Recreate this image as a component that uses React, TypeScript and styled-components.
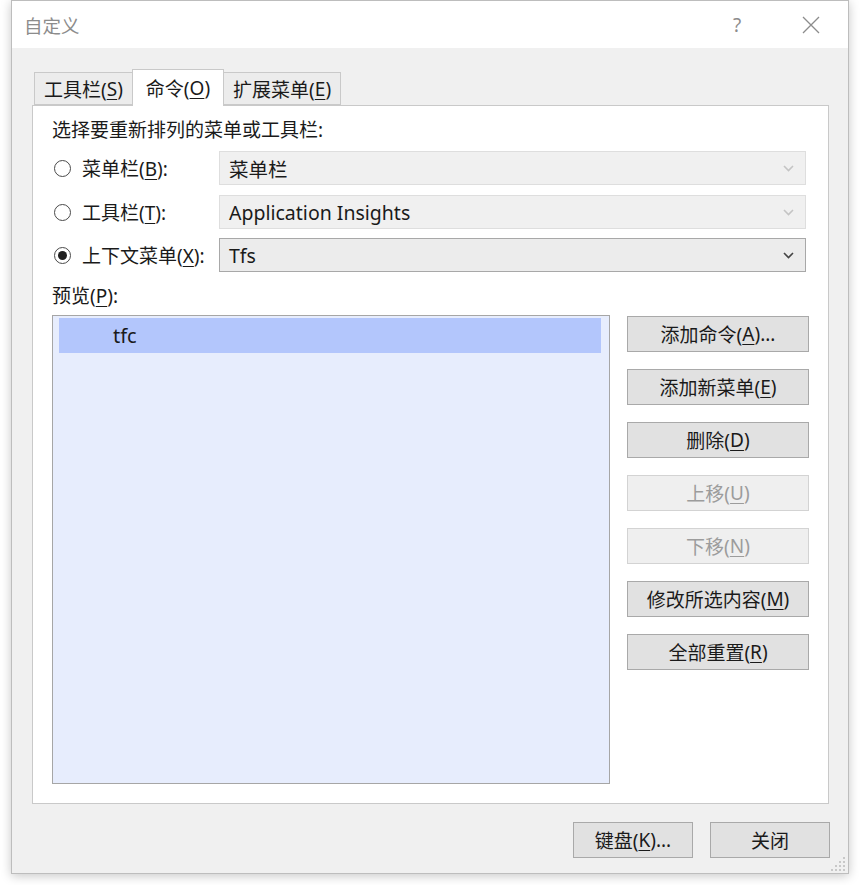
import React from 'react';
import styled, { createGlobalStyle } from 'styled-components';

const Global = createGlobalStyle`
  html, body { margin: 0; padding: 0; background: #ffffff; }
  body { font-family: "Noto Sans", "Noto Sans CJK SC", sans-serif; color: #1a1a1a; }
`;

const FONT = `"Noto Sans", "Noto Sans CJK SC", sans-serif`;

const Page = styled.div`
  width: 860px; height: 885px; overflow: hidden;
  padding: 0 0 0 11px; box-sizing: border-box;
`;

const Window = styled.div`
  width: 838px; height: 874px; box-sizing: border-box;
  border: 1px solid #bdbdbd; background: #f0f0f0;
  box-shadow: 0 2px 10px rgba(0, 0, 0, 0.22);
  display: flex; flex-direction: column; position: relative;
`;

const TitleBar = styled.div`
  height: 47px; background: #ffffff; display: flex; align-items: center;
  padding: 0 0 0 12px; flex-shrink: 0;
`;

const Title = styled.div`
  font-family: "Noto Sans CJK SC", sans-serif; font-size: 18.5px; color: #8c8c8c; flex: 1;
`;

const TitleButton = styled.div`
  width: 74px; display: flex; justify-content: center; align-items: center;
  color: #8c8c8c; font-family: ${FONT}; font-size: 19px;
`;

const Body = styled.div`
  flex: 1; display: flex; flex-direction: column; padding: 21px 19px 0 20px;
`;

const TabStrip = styled.div`
  display: flex; align-items: flex-end; height: 36px; padding-left: 2px;
  position: relative; z-index: 1;
`;

const Tab = styled.div<{ $active?: boolean }>`
  box-sizing: border-box;
  height: ${p => (p.$active ? '37px' : '33px')};
  margin-bottom: ${p => (p.$active ? '-1px' : '0')};
  background: ${p => (p.$active ? '#ffffff' : '#ececec')};
  border: 1px solid #c9c9c9;
  border-bottom: ${p => (p.$active ? 'none' : '1px solid #c9c9c9')};
  margin-left: -1px;
  padding: 0 ${p => (p.$active ? '13px' : '9px')};
  display: flex; align-items: center;
  font-family: ${FONT}; font-size: 19px; color: #1a1a1a;
  &:first-child { margin-left: 0; }
`;

const Panel = styled.div`
  background: #ffffff; border: 1px solid #c9c9c9; height: 699px; box-sizing: border-box;
  padding: 12px 19px 19px 19px; display: flex; flex-direction: column;
`;

const Heading = styled.div`
  font-family: ${FONT}; font-size: 19px; line-height: 24px; height: 24px;
`;

const Row = styled.div<{ $top: number }>`
  display: flex; align-items: center; margin-top: ${p => p.$top}px; height: 34px;
`;

const RadioWrap = styled.div`
  width: 167px; display: flex; align-items: center; flex-shrink: 0;
`;

const RadioCircle = styled.div<{ $checked?: boolean }>`
  width: 17px; height: 17px; box-sizing: border-box; border-radius: 50%;
  border: 1px solid #4a4a4a; display: flex; align-items: center; justify-content: center;
  margin: 0 11px 0 2px; background: #fff;
  &::after {
    content: ''; width: 9px; height: 9px; border-radius: 50%;
    background: ${p => (p.$checked ? '#1f1f1f' : 'transparent')};
  }
`;

const Label = styled.span`
  font-family: ${FONT}; font-size: 19px; color: #1a1a1a; white-space: nowrap;
`;

const Key = styled.span`
  text-decoration: underline; text-underline-offset: 3px; text-decoration-thickness: 1px;
`;

const Select = styled.div<{ $disabled?: boolean }>`
  width: 587px; height: 34px; box-sizing: border-box;
  border: 1px solid ${p => (p.$disabled ? '#dedede' : '#a8a8a8')};
  background: ${p => (p.$disabled ? '#f0f0f0' : '#ececec')};
  display: flex; align-items: center; padding: 0 11px 0 9px;
  font-family: ${FONT}; font-size: 19.5px; color: #1a1a1a;
`;

const SelectText = styled.span`
  flex: 1;
`;

const PreviewLabel = styled(Heading)`
  margin-top: 12px;
`;

const Lower = styled.div`
  flex: 1; display: flex; margin-top: 7px; gap: 17px;
`;

const List = styled.div`
  width: 558px; box-sizing: border-box; border: 1px solid #a6a6a6;
  background: #e7edfd; padding: 2px 8px 0 6px;
`;

const ListItem = styled.div<{ $selected?: boolean }>`
  height: 35px; display: flex; align-items: center; padding-left: 54px;
  background: ${p => (p.$selected ? '#b3c6fc' : 'transparent')};
  font-family: ${FONT}; font-size: 20px; color: #1a1a1a;
`;

const ButtonColumn = styled.div`
  display: flex; flex-direction: column; gap: 17px; padding-top: 1px;
`;

const Button = styled.div<{ $disabled?: boolean; $w?: number }>`
  width: ${p => p.$w ?? 182}px; height: 36px; box-sizing: border-box;
  border: 1px solid ${p => (p.$disabled ? '#d3d3d3' : '#a9a9a9')};
  background: ${p => (p.$disabled ? '#efefef' : '#e1e1e1')};
  color: ${p => (p.$disabled ? '#9c9c9c' : '#1a1a1a')};
  display: flex; align-items: center; justify-content: center;
  font-family: ${FONT}; font-size: 19px; white-space: nowrap;
`;

const Footer = styled.div`
  display: flex; justify-content: flex-end; gap: 17px; padding: 18px 0 0 0;
  margin-right: -1px;
`;

const Grip = styled.svg`
  position: absolute; right: 1px; bottom: 1px;
`;

const Chevron = ({ color }: { color: string }) => (
  <svg width="11" height="7" viewBox="0 0 11 7">
    <polyline points="1,1 5.5,5.5 10,1" fill="none" stroke={color} strokeWidth="1.6" />
  </svg>
);

const sideButtons: { text: string; key: string; tail?: string; pre: string; disabled?: boolean }[] = [
  { pre: '添加命令(', key: 'A', text: ')', tail: '...' },
  { pre: '添加新菜单(', key: 'E', text: ')' },
  { pre: '删除(', key: 'D', text: ')' },
  { pre: '上移(', key: 'U', text: ')', disabled: true },
  { pre: '下移(', key: 'N', text: ')', disabled: true },
  { pre: '修改所选内容(', key: 'M', text: ')' },
  { pre: '全部重置(', key: 'R', text: ')' },
];

const App: React.FC = () => {
  return (
    <Page>
      <Global />
      <Window>
        <TitleBar>
          <Title>自定义</Title>
          <TitleButton>?</TitleButton>
          <TitleButton>
            <svg width="18" height="18" viewBox="0 0 18 18">
              <path d="M1 1 L17 17 M17 1 L1 17" stroke="#8c8c8c" strokeWidth="1.3" />
            </svg>
          </TitleButton>
        </TitleBar>
        <Body>
          <TabStrip>
            <Tab>工具栏(<Key>S</Key>)</Tab>
            <Tab $active>命令(<Key>O</Key>)</Tab>
            <Tab>扩展菜单(<Key>E</Key>)</Tab>
          </TabStrip>
          <Panel>
            <Heading>选择要重新排列的菜单或工具栏:</Heading>
            <Row $top={9}>
              <RadioWrap>
                <RadioCircle />
                <Label>菜单栏(<Key>B</Key>):</Label>
              </RadioWrap>
              <Select $disabled>
                <SelectText>菜单栏</SelectText>
                <Chevron color="#c4c4c4" />
              </Select>
            </Row>
            <Row $top={10}>
              <RadioWrap>
                <RadioCircle />
                <Label>工具栏(<Key>T</Key>):</Label>
              </RadioWrap>
              <Select $disabled>
                <SelectText>Application Insights</SelectText>
                <Chevron color="#c4c4c4" />
              </Select>
            </Row>
            <Row $top={9}>
              <RadioWrap>
                <RadioCircle $checked />
                <Label>上下文菜单(<Key>X</Key>):</Label>
              </RadioWrap>
              <Select>
                <SelectText>Tfs</SelectText>
                <Chevron color="#444444" />
              </Select>
            </Row>
            <PreviewLabel>预览(<Key>P</Key>):</PreviewLabel>
            <Lower>
              <List>
                <ListItem $selected>tfc</ListItem>
              </List>
              <ButtonColumn>
                {sideButtons.map(b => (
                  <Button key={b.key} $disabled={b.disabled}>
                    {b.pre}<Key>{b.key}</Key>{b.text}{b.tail}
                  </Button>
                ))}
              </ButtonColumn>
            </Lower>
          </Panel>
          <Footer>
            <Button $w={120}>键盘(<Key>K</Key>)...</Button>
            <Button $w={120}>关闭</Button>
          </Footer>
        </Body>
        <Grip width="16" height="16" viewBox="0 0 16 16">
          {[[13, 3], [13, 7], [9, 7], [13, 11], [9, 11], [5, 11], [13, 15], [9, 15], [5, 15], [1, 15]].map(([x, y], i) => (
            <rect key={i} x={x - 1} y={y - 2} width="2" height="2" fill="#c8c8c8" />
          ))}
        </Grip>
      </Window>
    </Page>
  );
};

export default App;
